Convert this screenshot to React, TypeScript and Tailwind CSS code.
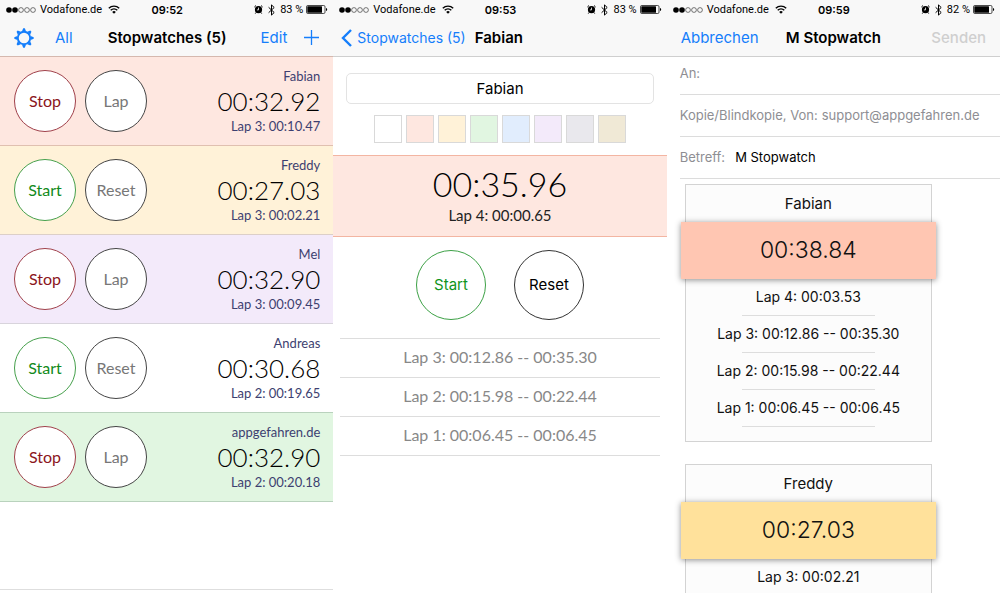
import { useState } from "react";

const inter = "font-['Inter','Liberation_Sans',sans-serif]";
const lato = "font-['Lato','Liberation_Sans',sans-serif]";

interface Watch {
  name: string;
  time: string;
  lap: string;
  running: boolean;
  color: string;
}

const watches: Watch[] = [
  { name: "Fabian", time: "00:32.92", lap: "Lap 3: 00:10.47", running: true, color: "bg-[#fee7e0] border-[#e0c0b0]" },
  { name: "Freddy", time: "00:27.03", lap: "Lap 3: 00:02.21", running: false, color: "bg-[#fff2d8] border-[#dccfc8]" },
  { name: "Mel", time: "00:32.90", lap: "Lap 3: 00:09.45", running: true, color: "bg-[#f3eafa] border-[#d8d4dc]" },
  { name: "Andreas", time: "00:30.68", lap: "Lap 2: 00:19.65", running: false, color: "bg-white border-[#b9d2bd]" },
  { name: "appgefahren.de", time: "00:32.90", lap: "Lap 2: 00:20.18", running: true, color: "bg-[#e1f6e1] border-[#b9d2bd]" },
];

const swatches = [
  { name: "White", color: "bg-white" },
  { name: "Red", color: "bg-[#fee7e0]" },
  { name: "Yellow", color: "bg-[#fff2d8]" },
  { name: "Green", color: "bg-[#e1f6e1]" },
  { name: "Blue", color: "bg-[#e1edfd]" },
  { name: "Purple", color: "bg-[#f3eafa]" },
  { name: "Gray", color: "bg-[#e9e8ed]" },
  { name: "Sand", color: "bg-[#f0e9d6]" },
];

const laps = [
  "Lap 3: 00:12.86 -- 00:35.30",
  "Lap 2: 00:15.98 -- 00:22.44",
  "Lap 1: 00:06.45 -- 00:06.45",
];

const reports = [
  { name: "Fabian", time: "00:38.84", color: "bg-[#ffc6b2]", laps: ["Lap 4: 00:03.53", ...laps] },
  { name: "Freddy", time: "00:27.03", color: "bg-[#ffe19b]", laps: ["Lap 3: 00:02.21"] },
];

function StatusBar({ time, battery }: { time: string; battery: string }) {
  return (
    <div className="grid h-[19px] grid-cols-[1fr_auto_1fr] items-center pl-[6px] pr-[5px] text-[11px] leading-4 text-black">
      <div className="flex items-center gap-1">
        <svg width="30" height="6" viewBox="0 0 30 6" aria-hidden="true">
          <circle cx="3" cy="3" r="2.8" />
          <circle cx="9" cy="3" r="2.8" />
          <g fill="none" stroke="#222" strokeWidth="0.6">
            <circle cx="15" cy="3" r="2.4" />
            <circle cx="21" cy="3" r="2.4" />
            <circle cx="27" cy="3" r="2.4" />
          </g>
        </svg>
        <span className="font-['Roboto','Liberation_Sans',sans-serif]">Vodafone.de</span>
        <svg className="ml-[2px]" width="12" height="9" viewBox="0 0 12 9" aria-hidden="true">
          <g fill="none" stroke="#000" strokeWidth="1.4">
            <path d="M0.8 3.3a7.4 7.4 0 0 1 10.4 0" />
            <path d="M2.7 5.3a4.7 4.7 0 0 1 6.6 0" />
          </g>
          <path d="M6 8.8 4.2 6.9a2.6 2.6 0 0 1 3.6 0z" />
        </svg>
      </div>
      <span className="font-semibold">{time}</span>
      <div className="flex items-center justify-end gap-[3px]">
        <svg width="9" height="9" viewBox="0 0 9 9" aria-hidden="true">
          <circle cx="4.5" cy="4.7" r="3.6" />
          <path d="M0.4 2 2 0.5M8.6 2 7 0.5M1.9 7.6 1.3 8.6M7.1 7.6l0.6 1" stroke="#000" strokeWidth="1" />
          <path d="M4.5 2.6v2.3H2.9" fill="none" stroke="#fff" strokeWidth="0.8" />
        </svg>
        <svg className="mx-[2px]" width="7" height="12" viewBox="0 0 7 12" aria-hidden="true">
          <path d="M0.6 3.3 6.2 8.5 3.5 11.1V0.9L6.2 3.5 0.6 8.7" fill="none" stroke="#000" strokeWidth="1" />
        </svg>
        <span className="whitespace-nowrap font-['Roboto','Liberation_Sans',sans-serif]">{battery} %</span>
        <svg width="22" height="9" viewBox="0 0 22 9" aria-hidden="true">
          <rect x="0.5" y="0.5" width="18.5" height="8" rx="1.3" fill="none" stroke="#000" strokeWidth="0.7" />
          <rect x="1.3" y="1.3" width="14.7" height="6.4" rx="0.5" />
          <path d="M20 2.9c1.6 0.4 1.6 2.8 0 3.2z" />
        </svg>
      </div>
    </div>
  );
}

function GearIcon() {
  return (
    <svg width="20" height="20" viewBox="-10 -10 20 20" aria-hidden="true">
      <circle r="6.2" fill="none" stroke="currentColor" strokeWidth="1.9" />
      {[0, 45, 90, 135, 180, 225, 270, 315].map((deg) => (
        <path key={deg} d="M-2.1 -6.6 L-0.8 -9.7 H0.8 L2.1 -6.6 Z" fill="currentColor" transform={`rotate(${deg})`} />
      ))}
    </svg>
  );
}

function StopwatchList() {
  return (
    <section className="min-w-0 overflow-hidden bg-white">
      <header className="border-b border-[#d5b8ae] bg-[#f8f8f8]">
        <StatusBar time="09:52" battery="83" />
        <div className="grid h-[37px] grid-cols-[1fr_auto_1fr] items-center pt-px pl-[14px] pr-[13px] text-[15px] text-[#157efb]">
          <div className="flex items-center gap-[21px]">
            <button aria-label="Settings">
              <GearIcon />
            </button>
            <button>All</button>
          </div>
          <h1 className="font-semibold text-black">Stopwatches (5)</h1>
          <div className="flex items-center justify-end gap-[17px]">
            <button>Edit</button>
            <button aria-label="Add stopwatch">
              <svg width="16" height="16" viewBox="0 0 16 16" aria-hidden="true">
                <path d="M7.5 0v15M0 7.5h15" stroke="currentColor" strokeWidth="1.3" />
              </svg>
            </button>
          </div>
        </div>
      </header>
      <ul className={lato}>
        {watches.map((w) => (
          <li key={w.name} className={`flex h-[89px] items-center justify-between border-b pl-[14px] pr-[13px] ${w.color}`}>
            <div className="flex gap-[9px] text-base">
              <button
                className={`size-[62px] rounded-full border bg-white ${
                  w.running ? "border-[#a0404a] text-[#8b1520]" : "border-[#46a04c] text-[#118a20]"
                }`}
              >
                {w.running ? "Stop" : "Start"}
              </button>
              <button className="size-[62px] rounded-full border border-[#444] bg-white text-[#777]">
                {w.running ? "Lap" : "Reset"}
              </button>
            </div>
            <div className="text-right text-[13px] leading-5 text-[#3d3f70]">
              <p>{w.name}</p>
              <p className="text-[26px] leading-[30px] font-light text-black">{w.time}</p>
              <p>{w.lap}</p>
            </div>
          </li>
        ))}
      </ul>
      <div className="h-[88px] border-b border-[#dedede]" />
    </section>
  );
}

function StopwatchDetail() {
  const [name, setName] = useState("Fabian");

  return (
    <section className="min-w-0 overflow-hidden bg-white">
      <header className="border-b border-[#cfcfcf] bg-[#f8f8f8]">
        <StatusBar time="09:53" battery="83" />
        <div className="flex h-[37px] items-center gap-[9px] px-2 pt-px text-[15px]">
          <button className="flex items-center gap-[5px] text-sm text-[#157efb]">
            <svg width="11" height="18" viewBox="0 0 11 18" aria-hidden="true">
              <path d="M10 1 2 9l8 8" fill="none" stroke="currentColor" strokeWidth="2.4" />
            </svg>
            Stopwatches (5)
          </button>
          <h2 className="font-semibold text-black">Fabian</h2>
        </div>
      </header>
      <div className="px-[13px] pt-4">
        <input
          aria-label="Name"
          value={name}
          onChange={(e) => setName(e.target.value)}
          className="h-[31px] w-full rounded-[5px] border border-[#e3e3e3] pb-px text-center text-[15px] text-black outline-none"
        />
      </div>
      <div className="flex justify-center gap-1 pt-[11px] pb-3">
        {swatches.map((s) => (
          <button key={s.name} aria-label={s.name} className={`size-7 border border-[#d9d9d9] ${s.color}`} />
        ))}
      </div>
      <div className={`border-y border-[#f3b5a2] bg-[#fee7e0] pt-[7px] pb-[11px] text-center ${lato}`}>
        <p className="text-[34px] leading-[42px] font-light text-black">00:35.96</p>
        <p className="text-[15px] leading-5 text-[#222]">Lap 4: 00:00.65</p>
      </div>
      <div className="flex justify-center gap-7 pt-[13px] pb-[18px] text-[15px]">
        <button className="size-[70px] rounded-full border border-[#3da146] text-[#0f9420]">Start</button>
        <button className="size-[70px] rounded-full border border-[#333] text-black">Reset</button>
      </div>
      <ul className={`mx-[7px] border-t border-[#ddd] text-center text-base text-[#888] ${lato}`}>
        {laps.map((lap) => (
          <li key={lap} className="h-[39px] border-b border-[#ddd] leading-9">
            {lap}
          </li>
        ))}
      </ul>
    </section>
  );
}

function MailComposer() {
  const row = "flex h-[42px] items-center border-b border-[#dcdcdc] text-[13px] text-[#8e8e93]";

  return (
    <section className="min-w-0 overflow-hidden bg-white">
      <header className="border-b border-[#cfcfcf] bg-[#f8f8f8]">
        <StatusBar time="09:59" battery="82" />
        <div className="grid h-[37px] grid-cols-[1fr_auto_1fr] items-center px-[14px] pt-px text-[15px]">
          <button className="justify-self-start text-[#157efb]">Abbrechen</button>
          <h2 className="font-semibold text-black">M Stopwatch</h2>
          <button disabled className="justify-self-end font-medium text-[#cfcfcf]">
            Senden
          </button>
        </div>
      </header>
      <form className="-mt-[4px] pl-[13px]">
        <div className={row}>
          <label htmlFor="to">An:</label>
          <input id="to" className="ml-2 min-w-0 flex-1 outline-none" />
        </div>
        <div className={row}>
          <label htmlFor="from">Kopie/Blindkopie, Von:</label>
          <input id="from" defaultValue="support@appgefahren.de" className="ml-1 min-w-0 flex-1 outline-none" />
        </div>
        <div className={row}>
          <label htmlFor="subject">Betreff:</label>
          <input id="subject" defaultValue="M Stopwatch" className="ml-[10px] min-w-0 flex-1 text-black outline-none" />
        </div>
      </form>
      <div className="flex flex-col gap-[22px] pt-[5px] pr-[68px] pl-[18px] text-center text-[15px] text-[#111]">
        {reports.map((r) => (
          <article key={r.name} className="border border-[#d3d3d3] bg-[#fcfcfc] pb-[14px]">
            <h3 className="leading-[37px]">{r.name}</h3>
            <p className={`relative -mx-[5px] text-[23px] leading-[57px] font-light shadow-[0_1px_6px_rgba(0,0,0,0.45)] ${r.color}`}>
              {r.time}
            </p>
            <ul className="text-sm">
              {r.laps.map((lap) => (
                <li key={lap} className="flex flex-col items-center">
                  <span className="leading-9">{lap}</span>
                  <hr className="w-[133px] border-[#ddd]" />
                </li>
              ))}
            </ul>
          </article>
        ))}
      </div>
    </section>
  );
}

export default function App() {
  return (
    <main className={`grid h-screen grid-cols-3 overflow-hidden bg-white ${inter}`}>
      <StopwatchList />
      <StopwatchDetail />
      <MailComposer />
    </main>
  );
}
